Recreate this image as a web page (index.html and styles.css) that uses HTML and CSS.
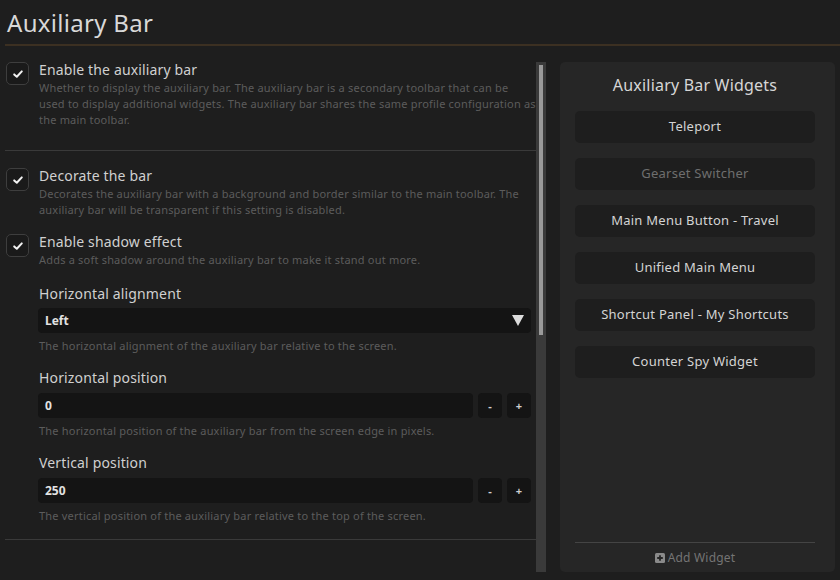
FILE: index.html
```html
<!DOCTYPE html>
<html>
<head>
<meta charset="utf-8">
<link rel="stylesheet" href="styles.css">
</head>
<body>
<div class="page">
  <header class="header"><h1 class="title">Auxiliary Bar</h1></header>
  <div class="main">
    <div class="settings">
      <div class="scrollarea">
        <section class="group">
          <div class="check-row">
            <span class="checkbox"><svg viewBox="0 0 12 12" width="12" height="12"><path d="M2.2 6.4 L4.8 8.8 L9.8 3.4" fill="none" stroke="#f2f2f2" stroke-width="2" stroke-linecap="round" stroke-linejoin="round"/></svg></span>
            <div class="check-text">
              <div class="label">Enable the auxiliary bar</div>
              <div class="desc">Whether to display the auxiliary bar. The auxiliary bar is a secondary toolbar that can be<br>used to display additional widgets. The auxiliary bar shares the same profile configuration as<br>the main toolbar.</div>
            </div>
          </div>
        </section>
        <section class="group second">
          <div class="check-row">
            <span class="checkbox"><svg viewBox="0 0 12 12" width="12" height="12"><path d="M2.2 6.4 L4.8 8.8 L9.8 3.4" fill="none" stroke="#f2f2f2" stroke-width="2" stroke-linecap="round" stroke-linejoin="round"/></svg></span>
            <div class="check-text">
              <div class="label">Decorate the bar</div>
              <div class="desc">Decorates the auxiliary bar with a background and border similar to the main toolbar. The<br>auxiliary bar will be transparent if this setting is disabled.</div>
            </div>
          </div>
          <div class="check-row">
            <span class="checkbox"><svg viewBox="0 0 12 12" width="12" height="12"><path d="M2.2 6.4 L4.8 8.8 L9.8 3.4" fill="none" stroke="#f2f2f2" stroke-width="2" stroke-linecap="round" stroke-linejoin="round"/></svg></span>
            <div class="check-text">
              <div class="label">Enable shadow effect</div>
              <div class="desc">Adds a soft shadow around the auxiliary bar to make it stand out more.</div>
            </div>
          </div>
          <div class="field">
            <div class="label">Horizontal alignment</div>
            <div class="select"><span class="value">Left</span><span class="caret"></span></div>
            <div class="desc">The horizontal alignment of the auxiliary bar relative to the screen.</div>
          </div>
          <div class="field">
            <div class="label">Horizontal position</div>
            <div class="num-row">
              <div class="input"><span class="value">0</span></div>
              <span class="step">-</span>
              <span class="step">+</span>
            </div>
            <div class="desc">The horizontal position of the auxiliary bar from the screen edge in pixels.</div>
          </div>
          <div class="field">
            <div class="label">Vertical position</div>
            <div class="num-row">
              <div class="input"><span class="value">250</span></div>
              <span class="step">-</span>
              <span class="step">+</span>
            </div>
            <div class="desc">The vertical position of the auxiliary bar relative to the top of the screen.</div>
          </div>
        </section>
      </div>
      <div class="scrollbar"><div class="thumb"></div></div>
    </div>
    <aside class="widgets">
      <h2 class="widgets-title">Auxiliary Bar Widgets</h2>
      <div class="widget-list">
        <div class="widget">Teleport</div>
        <div class="widget disabled">Gearset Switcher</div>
        <div class="widget">Main Menu Button - Travel</div>
        <div class="widget">Unified Main Menu</div>
        <div class="widget">Shortcut Panel - My Shortcuts</div>
        <div class="widget">Counter Spy Widget</div>
      </div>
      <div class="widgets-footer">
        <span class="add"><svg class="add-icon" viewBox="0 0 10 10" width="10" height="10"><rect x="0" y="0" width="10" height="10" rx="1.5" fill="#8a8a8a"/><path d="M5 2.2 V7.8 M2.2 5 H7.8" stroke="#262626" stroke-width="1.8"/></svg>Add Widget</span>
      </div>
    </aside>
  </div>
</div>
</body>
</html>
```

FILE: styles.css
```css
* { box-sizing: border-box; }
html, body { margin: 0; padding: 0; }
body {
  width: 840px;
  height: 580px;
  overflow: hidden;
  background: #1e1e1e;
  font-family: "Noto Sans", "DejaVu Sans", sans-serif;
  color: #d2d2d2;
}
.page {
  display: flex;
  flex-direction: column;
  height: 580px;
}
.header {
  margin-left: 5px;
  height: 46px;
  border-bottom: 2px solid #3c3022;
  padding-left: 2px;
}
.title {
  margin: 0;
  font-weight: normal;
  font-size: 24px;
  line-height: 46px;
  color: #d8d8d8;
  letter-spacing: 0.3px;
}
.main {
  display: flex;
  padding: 16px 5px 8px 5px;
  flex: 1;
  min-height: 0;
}
.settings {
  display: flex;
  width: 541px;
}
.scrollarea {
  width: 531px;
}
.group {
  border-bottom: 1px solid #3a3a3a;
  padding-bottom: 12px;
}
.group.second {
  padding-top: 17px;
  padding-bottom: 15px;
}
.check-row {
  display: flex;
  gap: 10px;
  margin-bottom: 16px;
}
.group .check-row:last-child { margin-bottom: 10px; }
.check-text { margin-top: -1px; }
.checkbox {
  width: 23px;
  height: 23px;
  margin-left: 1px;
  border: 1px solid #3e3e3e;
  border-radius: 5px;
  background: #1a1a1a;
  display: flex;
  align-items: center;
  justify-content: center;
  flex: none;
}
.label {
  font-size: 14px;
  line-height: 18px;
  color: #d0d0d0;
  letter-spacing: 0.15px;
}
.desc {
  font-size: 11px;
  line-height: 16px;
  color: #5c5c5c;
  margin-top: 1px;
  letter-spacing: 0.2px;
}
.field {
  padding-left: 33px;
  padding-right: 5px;
  margin-top: 15px;
}
.check-row + .field { margin-top: 17px; }
.field .label { margin-bottom: 5px; padding-left: 1px; }
.field .desc { margin-top: 5px; padding-left: 1px; }
.select, .input {
  height: 25px;
  background: #141414;
  border-radius: 4px;
  display: flex;
  align-items: center;
  justify-content: space-between;
  padding: 0 7px;
}
.value {
  font-size: 12px;
  font-weight: bold;
  color: #e2e2e2;
}
.caret {
  width: 0;
  height: 0;
  border-left: 6px solid transparent;
  border-right: 6px solid transparent;
  border-top: 11px solid #dcdcdc;
}
.num-row {
  display: flex;
  gap: 5px;
  padding-top: 1px;
}
.input { flex: 1; }
.step {
  width: 24px;
  height: 25px;
  background: #141414;
  border-radius: 4px;
  display: flex;
  align-items: center;
  justify-content: center;
  font-size: 11px;
  font-weight: bold;
  color: #cfcfcf;
}
.scrollbar {
  width: 10px;
  background: #3a3a3a;
  padding: 3px;
  height: 510px;
}
.thumb {
  height: 270px;
  background: #9a9a9a;
}
.widgets {
  margin-left: 14px;
  width: 275px;
  height: 510px;
  background: #262626;
  border-radius: 5px;
  padding: 0 20px 0 15px;
  display: flex;
  flex-direction: column;
}
.widgets-title {
  margin: 0;
  text-align: center;
  font-weight: normal;
  font-size: 16px;
  line-height: 20px;
  padding-top: 13px;
  height: 49px;
  color: #d6d6d6;
  letter-spacing: 0.2px;
}
.widget-list {
  display: flex;
  flex-direction: column;
  gap: 15px;
  flex: 1;
}
.widget {
  height: 32px;
  background: #1e1e1e;
  border-radius: 5px;
  display: flex;
  align-items: center;
  justify-content: center;
  font-size: 13px;
  color: #d4d4d4;
  letter-spacing: 0.25px;
  padding-bottom: 2px;
}
.widget.disabled { color: #6e6e6e; }
.widgets-footer {
  border-top: 1px solid #444;
  height: 30px;
  display: flex;
  align-items: center;
  justify-content: center;
}
.add {
  display: flex;
  align-items: center;
  gap: 3px;
  font-size: 12px;
  color: #747474;
  letter-spacing: 0.2px;
}
```
